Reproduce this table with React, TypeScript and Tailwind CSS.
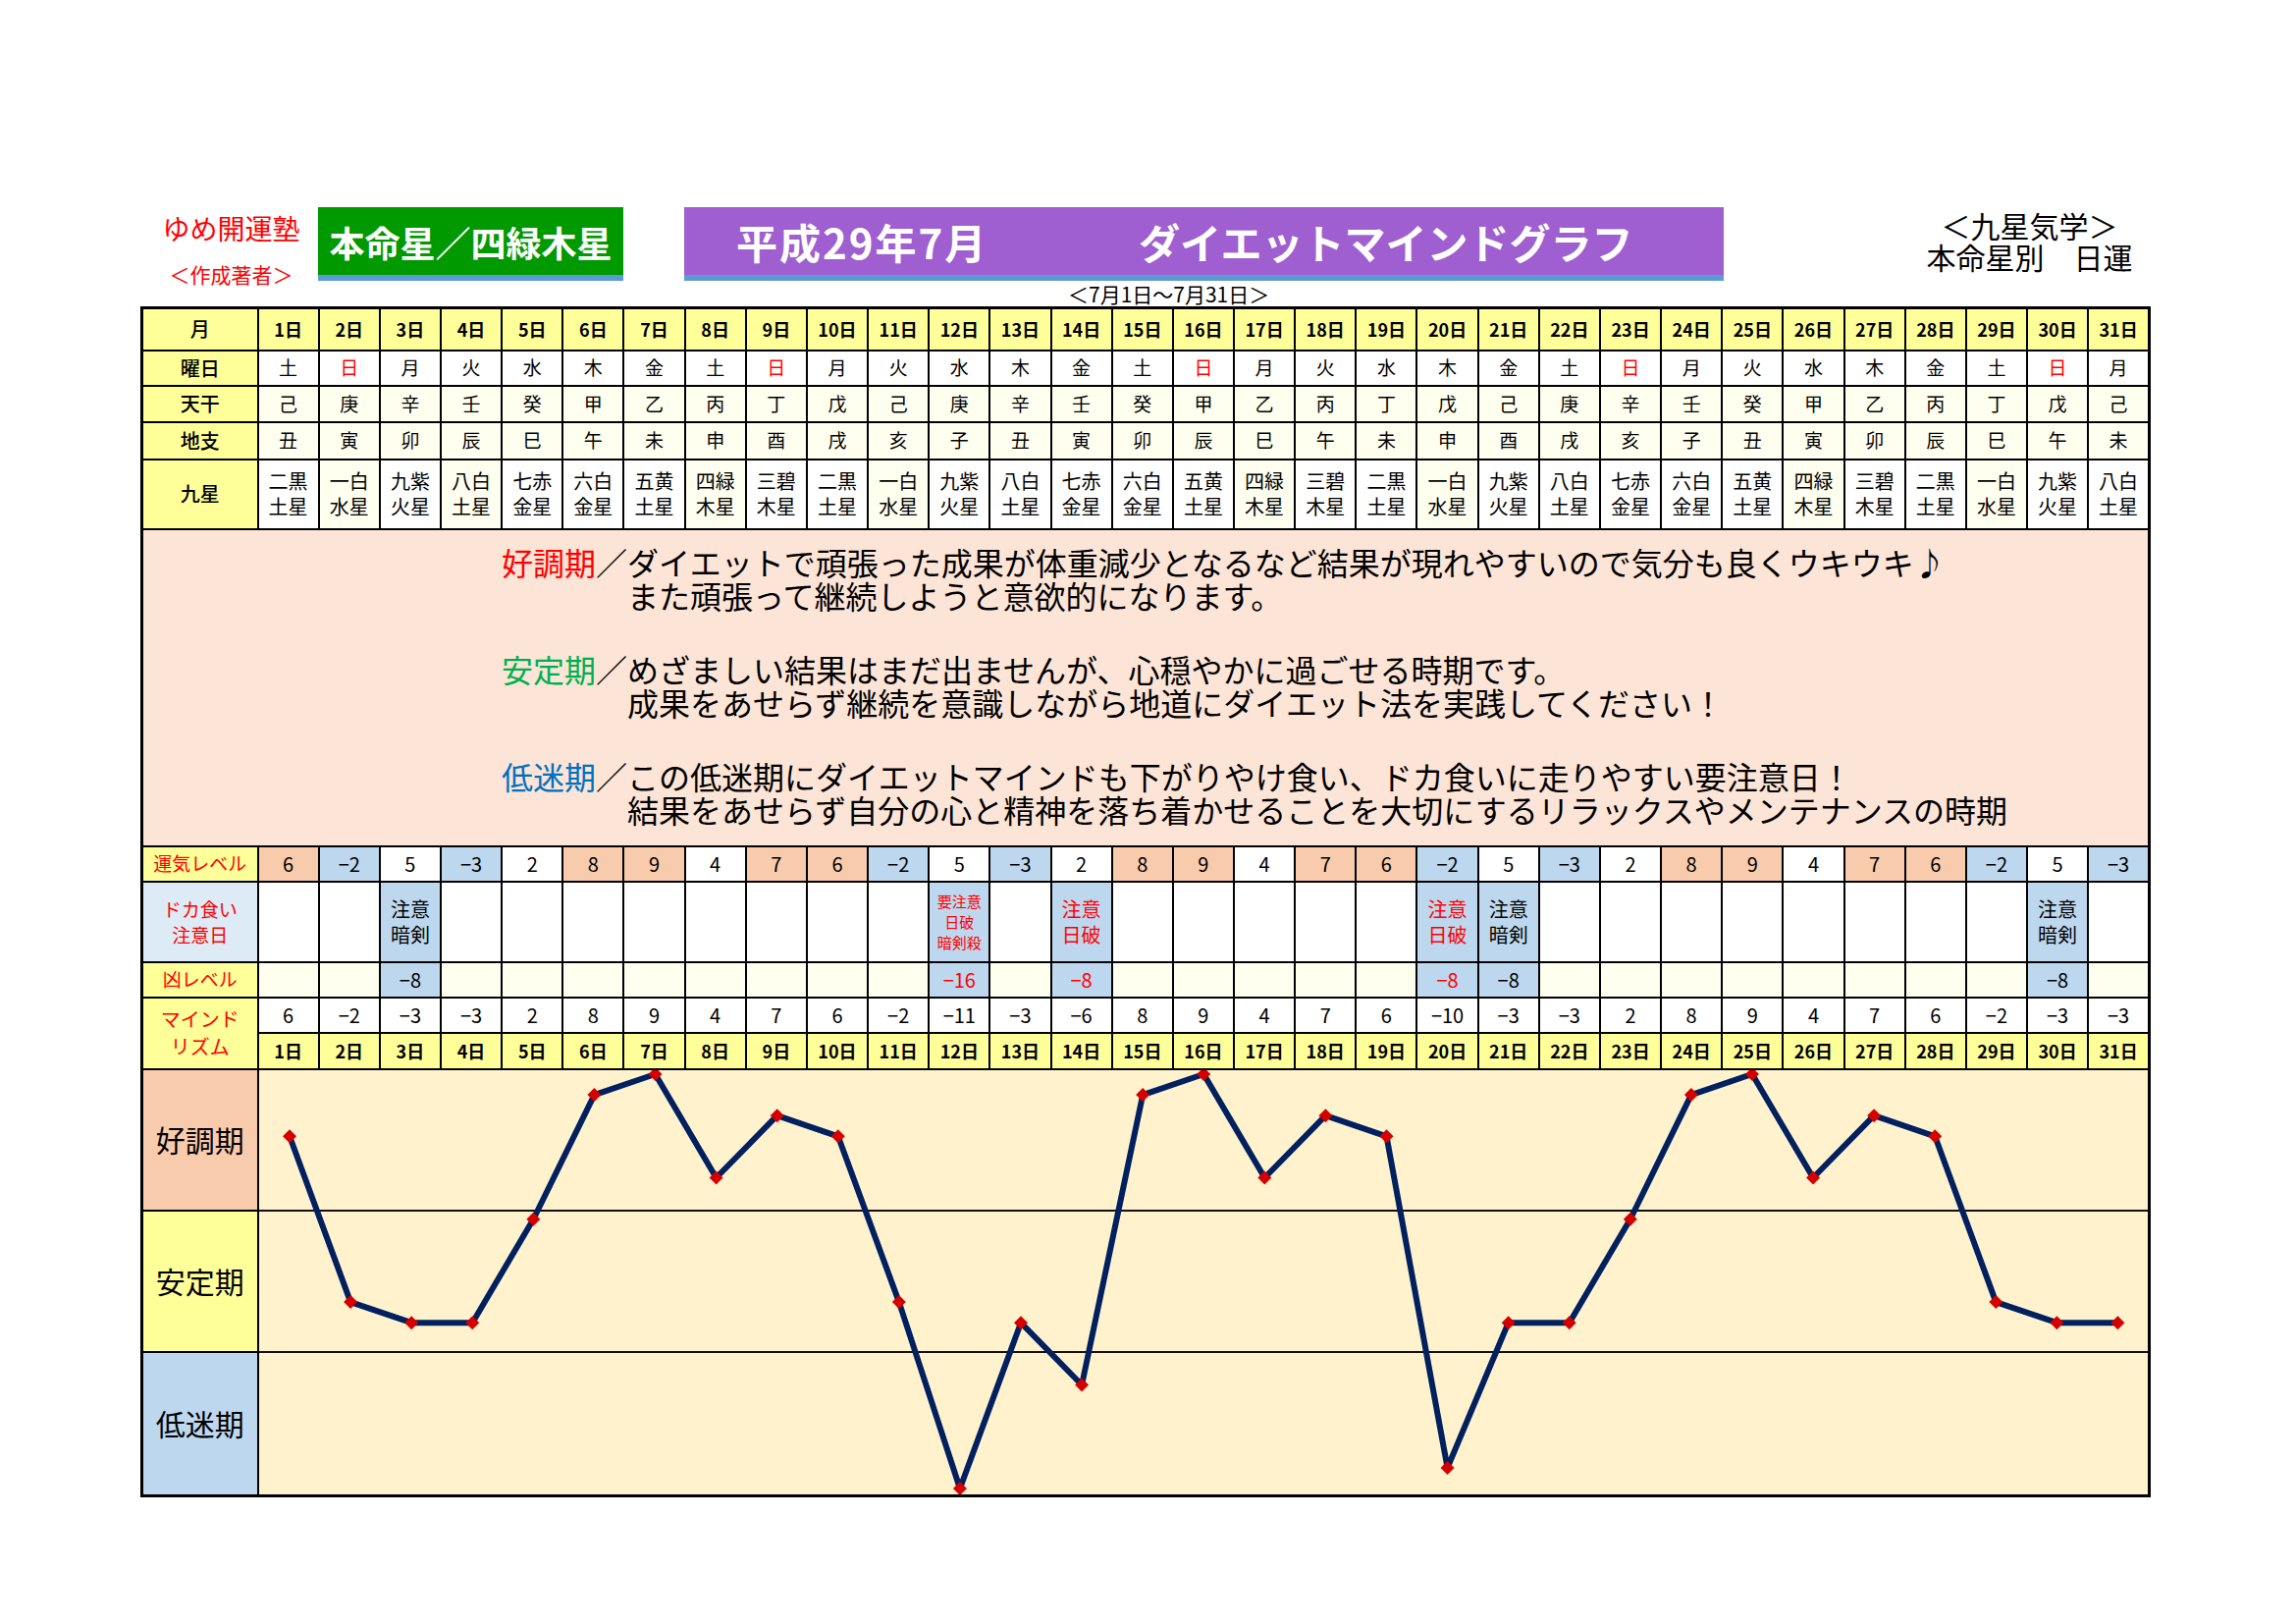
import React from "react";

const YOUBI = ["土", "日", "月", "火", "水", "木", "金"];
const KAN = ["己", "庚", "辛", "壬", "癸", "甲", "乙", "丙", "丁", "戊"];
const SHI = ["丑", "寅", "卯", "辰", "巳", "午", "未", "申", "酉", "戌", "亥", "子"];
const STARS: [string, string][] = [
  ["二黒", "土星"],
  ["一白", "水星"],
  ["九紫", "火星"],
  ["八白", "土星"],
  ["七赤", "金星"],
  ["六白", "金星"],
  ["五黄", "土星"],
  ["四緑", "木星"],
  ["三碧", "木星"],
];
const UNKI_CYCLE = [6, -2, 5, -3, 2, 8, 9, 4, 7];
const MIND = [6, -2, -3, -3, 2, 8, 9, 4, 7, 6, -2, -11, -3, -6, 8, 9, 4, 7, 6, -10, -3, -3, 2, 8, 9, 4, 7, 6, -2, -3, -3];
const CREAM_STAR = [2, 4, 8, 11, 17, 20, 26, 29];

type Warn = { lines: string[]; red: boolean; small?: boolean; kyo: number };
const WARN: Record<number, Warn> = {
  3: { lines: ["注意", "暗剣"], red: false, kyo: -8 },
  12: { lines: ["要注意", "日破", "暗剣殺"], red: true, small: true, kyo: -16 },
  14: { lines: ["注意", "日破"], red: true, kyo: -8 },
  20: { lines: ["注意", "日破"], red: true, kyo: -8 },
  21: { lines: ["注意", "暗剣"], red: false, kyo: -8 },
  30: { lines: ["注意", "暗剣"], red: false, kyo: -8 },
};

const DAYS = Array.from({ length: 31 }, (_, i) => i + 1);
const fmt = (v: number) => (v < 0 ? "−" + Math.abs(v) : String(v));

const cell = "border-2 border-black text-center align-middle p-0";
const labelCell = cell + " bg-[#ffff99] text-[20px] font-medium";

function Chart() {
  const W = 1930;
  const H = 432;
  const cw = W / 31;
  const pts = MIND.map((v, i) => [(i + 0.5) * cw, 4 + (9 - v) * 21.1] as [number, number]);
  return (
    <div className="relative h-[432px] w-full bg-[#fff2cc]">
      <div className="flex h-full flex-col">
        <div className="h-[144px] border-b-2 border-[#111]" />
        <div className="h-[144px] border-b-2 border-[#111]" />
        <div className="flex-1" />
      </div>
      <svg className="absolute inset-0 h-full w-full" viewBox={`0 0 ${W} ${H}`} preserveAspectRatio="none">
        <polyline
          points={pts.map((p) => p.join(",")).join(" ")}
          fill="none"
          stroke="#002060"
          strokeWidth={6}
          strokeLinejoin="round"
        />
        {pts.map(([x, y], i) => (
          <polygon key={i} points={`${x},${y - 7} ${x + 7},${y} ${x},${y + 7} ${x - 7},${y}`} fill="#d40000" />
        ))}
      </svg>
    </div>
  );
}

function Group({ label, color, l1, l2 }: { label: string; color: string; l1: string; l2: string }) {
  return (
    <div className="flex whitespace-nowrap">
      <span className="w-[128px] shrink-0 whitespace-nowrap">
        <span className={color}>{label}</span>／
      </span>
      <div>
        <div>{l1}</div>
        <div>{l2}</div>
      </div>
    </div>
  );
}

export default function App() {
  return (
    <div className="relative h-[1654px] w-[2339px] bg-white font-['Noto_Sans_CJK_JP','Noto_Sans',sans-serif] text-black">
      {/* header */}
      <div className="flex h-[286px] items-start pt-[211px]">
        <div className="ml-[163px] flex w-[145px] flex-col items-center text-[#ff0000]">
          <div className="mt-[4px] text-[28px] leading-[34px]">ゆめ開運塾</div>
          <div className="mt-[17px] text-[21px] leading-[26px]">＜作成著者＞</div>
        </div>
        <div className="ml-[16px] flex h-[75px] w-[311px] flex-col bg-[#009900]">
          <div className="flex flex-1 items-center justify-center text-[36px] font-bold leading-none text-white">
            本命星／四緑木星
          </div>
          <div className="h-[6px] bg-[#5b9bd5]" />
        </div>
        <div className="ml-[62px] flex h-[75px] w-[1059px] flex-col bg-[#9f5fd0]">
          <div className="flex flex-1 items-center pl-[53px] text-[42px] font-bold leading-none text-white">
            <span className="w-[410px] tracking-[2px]">平成29年7月</span>
            <span>ダイエットマインドグラフ</span>
          </div>
          <div className="h-[6px] bg-[#5b9bd5]" />
        </div>
        <div className="ml-[204px] mt-[2px] flex w-[215px] flex-col items-center text-[30px] leading-[32px]">
          <div>＜九星気学＞</div>
          <div>本命星別　日運</div>
        </div>
      </div>
      <div className="h-[26px] pl-[1088px] text-[21px] leading-[26px]">＜7月1日～7月31日＞</div>

      {/* table */}
      <table className="ml-[143px] w-[2048px] table-fixed border-collapse border-[3px] border-black">
        <colgroup>
          <col className="w-[118px]" />
          {DAYS.map((d) => (
            <col key={d} />
          ))}
        </colgroup>
        <tbody>
          <tr>
            <td className={labelCell + " h-[43px]"}>月</td>
            {DAYS.map((d) => (
              <td key={d} className={cell + " bg-[#ffff99] text-[18px] font-bold"}>
                {d}日
              </td>
            ))}
          </tr>
          <tr>
            <td className={labelCell + " h-[36px]"}>曜日</td>
            {DAYS.map((d) => {
              const y = YOUBI[(d - 1) % 7];
              return (
                <td key={d} className={cell + " bg-white text-[19px]" + (y === "日" ? " text-[#ff0000]" : "")}>
                  {y}
                </td>
              );
            })}
          </tr>
          <tr>
            <td className={labelCell + " h-[37px]"}>天干</td>
            {DAYS.map((d) => (
              <td key={d} className={cell + " bg-[#fffff0] text-[19px]"}>
                {KAN[(d - 1) % 10]}
              </td>
            ))}
          </tr>
          <tr>
            <td className={labelCell + " h-[38px]"}>地支</td>
            {DAYS.map((d) => (
              <td key={d} className={cell + " bg-[#fffff0] text-[19px]"}>
                {SHI[(d - 1) % 12]}
              </td>
            ))}
          </tr>
          <tr>
            <td className={labelCell + " h-[71px]"}>九星</td>
            {DAYS.map((d) => {
              const s = STARS[(d - 1) % 9];
              return (
                <td
                  key={d}
                  className={cell + " text-[20px] leading-[26px] " + (CREAM_STAR.includes(d) ? "bg-[#fffff0]" : "bg-white")}
                >
                  <div>{s[0]}</div>
                  <div>{s[1]}</div>
                </td>
              );
            })}
          </tr>
          <tr>
            <td colSpan={32} className="h-[323px] border-2 border-black bg-[#fce4d6] p-0 align-top">
              <div className="flex flex-col gap-[41px] pl-[365px] pt-[15px] text-[32px] leading-[34px]">
                <Group
                  label="好調期"
                  color="text-[#ff0000]"
                  l1="ダイエットで頑張った成果が体重減少となるなど結果が現れやすいので気分も良くウキウキ♪"
                  l2="また頑張って継続しようと意欲的になります。"
                />
                <Group
                  label="安定期"
                  color="text-[#00b050]"
                  l1="めざましい結果はまだ出ませんが、心穏やかに過ごせる時期です。"
                  l2="成果をあせらず継続を意識しながら地道にダイエット法を実践してください！"
                />
                <Group
                  label="低迷期"
                  color="text-[#0070c0]"
                  l1="この低迷期にダイエットマインドも下がりやけ食い、ドカ食いに走りやすい要注意日！"
                  l2="結果をあせらず自分の心と精神を落ち着かせることを大切にするリラックスやメンテナンスの時期"
                />
              </div>
            </td>
          </tr>
          <tr>
            <td className={cell + " h-[36px] bg-[#ffff99] text-[19px] text-[#ff0000]"}>運気レベル</td>
            {DAYS.map((d) => {
              const v = UNKI_CYCLE[(d - 1) % 9];
              const bg = v < 0 ? "bg-[#bdd7ee]" : v >= 6 ? "bg-[#f8cbad]" : "bg-white";
              return (
                <td key={d} className={cell + " text-[20px] " + bg}>
                  {fmt(v)}
                </td>
              );
            })}
          </tr>
          <tr>
            <td className={cell + " h-[82px] bg-[#ddebf7] text-[19px] leading-[26px] text-[#ff0000]"}>
              <div>ドカ食い</div>
              <div>注意日</div>
            </td>
            {DAYS.map((d) => {
              const w = WARN[d];
              if (!w) return <td key={d} className={cell + " bg-white"} />;
              return (
                <td
                  key={d}
                  className={
                    cell +
                    " bg-[#bdd7ee] " +
                    (w.small ? "text-[15px] leading-[21px] " : "text-[20px] leading-[26px] ") +
                    (w.red ? "text-[#ff0000]" : "")
                  }
                >
                  {w.lines.map((l) => (
                    <div key={l}>{l}</div>
                  ))}
                </td>
              );
            })}
          </tr>
          <tr>
            <td className={cell + " h-[36px] bg-[#ffff99] text-[19px] text-[#ff0000]"}>凶レベル</td>
            {DAYS.map((d) => {
              const w = WARN[d];
              if (!w) return <td key={d} className={cell + " bg-[#fffff0]"} />;
              return (
                <td key={d} className={cell + " bg-[#bdd7ee] text-[20px]" + (w.red ? " text-[#ff0000]" : "")}>
                  {fmt(w.kyo)}
                </td>
              );
            })}
          </tr>
          <tr>
            <td rowSpan={2} className={cell + " bg-[#ffff99] text-[20px] leading-[28px] text-[#ff0000]"}>
              <div>マインド</div>
              <div>リズム</div>
            </td>
            {DAYS.map((d) => (
              <td key={d} className={cell + " h-[36px] bg-white text-[20px]"}>
                {fmt(MIND[d - 1])}
              </td>
            ))}
          </tr>
          <tr>
            {DAYS.map((d) => (
              <td key={d} className={cell + " h-[37px] bg-[#ffff99] text-[18px] font-bold"}>
                {d}日
              </td>
            ))}
          </tr>
          <tr>
            <td className="border-2 border-black p-0 align-top">
              <div className="flex h-[432px] flex-col text-[30px]">
                <div className="flex h-[144px] items-center justify-center border-b-2 border-black bg-[#f8cbad]">好調期</div>
                <div className="flex h-[144px] items-center justify-center border-b-2 border-black bg-[#ffff99]">安定期</div>
                <div className="flex flex-1 items-center justify-center bg-[#bdd7ee]">低迷期</div>
              </div>
            </td>
            <td colSpan={31} className="border-2 border-black p-0 align-top">
              <Chart />
            </td>
          </tr>
        </tbody>
      </table>
    </div>
  );
}
